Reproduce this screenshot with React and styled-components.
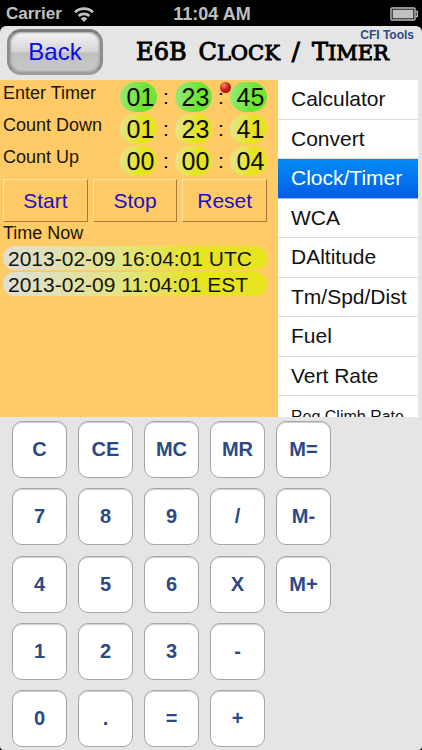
import React, { useState } from "react";
import styled, { createGlobalStyle } from "styled-components";

const GlobalStyle = createGlobalStyle`
  * {
    box-sizing: border-box;
  }
  body {
    margin: 0;
    background: #000;
    font-family: "Liberation Sans", Arial, Helvetica, sans-serif;
  }
  button, input {
    font-family: inherit;
    margin: 0;
    padding: 0;
  }
`;

const Page = styled.div`
  display: flex;
  flex-direction: column;
  min-height: 100vh;
`;

//---------------------------------------------------------------- status bar

const StatusBar = styled.div`
  display: grid;
  grid-template-columns: 1fr auto 1fr;
  align-items: center;
  height: 26px;
  padding: 2px 4px 0 6px;
  color: #c0c0c0;
  font-size: 17px;
  font-weight: bold;
`;

const Carrier = styled.div`
  display: flex;
  align-items: center;
  gap: 11px;
`;

const Clock = styled.div`
  font-size: 18px;
`;

const BatteryBox = styled.div`
  display: flex;
  justify-content: flex-end;
`;

//---------------------------------------------------------------- header

const Screen = styled.div`
  display: flex;
  flex: 1 0 auto;
  flex-direction: column;
  background: #e5e5e5;
  border-radius: 6px 6px 4px 4px;
`;

const Header = styled.header`
  display: flex;
  height: 54px;
  padding: 3px 0 0 7px;
`;

const BackButton = styled.button`
  flex: 0 0 auto;
  width: 96px;
  height: 46px;
  border: 3px solid;
  border-color: #7c7c7c #8e8e8e #9c9c9c;
  border-radius: 14px;
  background: linear-gradient(#f4f4f4, #d4d4d4 50%, #c0c0c0 52%, #c8c8c8);
  box-shadow: inset 0 0 2px 1px #a4a4a4;
  color: #0b0be8;
  font-size: 24px;
`;

const Heading = styled.div`
  display: flex;
  flex: 1;
  flex-direction: column;
`;

const ToolsLink = styled.a`
  align-self: flex-end;
  margin-right: 8px;
  color: #2f4a85;
  font-size: 12px;
  font-weight: bold;
  line-height: 12px;
  text-decoration: none;
`;

const Title = styled.h1`
  display: flex;
  align-items: baseline;
  justify-content: center;
  gap: 12px;
  margin: 0;
  color: #000;
  font-family: "DejaVu Serif", serif;
  font-size: 21px;
  font-weight: normal;
  line-height: 22px;
  text-transform: uppercase;
  white-space: nowrap;
  -webkit-text-stroke: 1px #000;
`;

const Word = styled.span`
  display: block;
  font-size: ${(p) => (p.$tall ? "24px" : "inherit")};

  &::first-letter {
    font-size: 24px;
  }
`;

//---------------------------------------------------------------- timer panel

const Main = styled.main`
  display: flex;
  height: 337px;
  padding-right: 4px;
`;

const TimerPanel = styled.section`
  flex: 1;
  padding: 2px 11px 0 3px;
  background: #ffcb66;
`;

const TimerRow = styled.div`
  display: flex;
  align-items: flex-start;
  justify-content: space-between;
  height: 32px;
`;

const Label = styled.div`
  color: #1c1408;
  font-size: 18px;
  line-height: 22px;
`;

const Digits = styled.div`
  display: flex;
  align-items: center;
  font-size: 25px;
  line-height: 30px;
`;

const pill = `
  width: 37px;
  height: 30px;
  padding-left: 4px;
  border: 0;
  border-radius: 15px;
  color: #0c0c00;
  font-size: 25px;
  line-height: 30px;
  text-align: center;
`;

const DigitInput = styled.input`
  ${pill}
  background: linear-gradient(100deg, #9bea7c, #6fe534 60%);
`;

const DigitOutput = styled.output`
  ${pill}
  background: linear-gradient(100deg, #e4e49c, #e6e41e 60%);
`;

const Colon = styled.span`
  position: relative;
  width: 18px;
  font-size: 21px;
  text-align: center;
`;

const Pin = styled.i`
  position: absolute;
  top: 0;
  left: 8px;
  width: 11px;
  height: 11px;
  border-radius: 50%;
  background: radial-gradient(circle at 35% 30%, #f08a7a, #cc1f14 45%, #8e0d08);
`;

const Actions = styled.div`
  display: grid;
  grid-template-columns: repeat(3, 1fr);
  gap: 5px;
  padding-top: 1px;
`;

const ActionButton = styled.button`
  height: 43px;
  border: 1px solid;
  border-color: #ffe2a8 #a07c38 #a07c38 #ffe2a8;
  background: transparent;
  color: #2010c4;
  font-size: 21px;
`;

const Stamps = styled.div`
  display: grid;
  gap: 2px;
  padding-top: 2px;
`;

const Stamp = styled.div`
  height: 24px;
  padding-left: 5px;
  border-radius: 12px;
  background: linear-gradient(90deg, #dededa, #e4e484 45%, #e6e41e 75%);
  color: #14140a;
  font-size: 21px;
  line-height: 26px;
  white-space: nowrap;
`;

//---------------------------------------------------------------- menu

const Menu = styled.nav`
  display: grid;
  flex: 0 0 140px;
  grid-template-rows: repeat(8, 1fr) 21px;
  overflow: hidden;
  background: #fff;
`;

const MenuItem = styled.button`
  min-height: 0;
  padding-left: 13px;
  border: 0;
  border-bottom: 1px solid ${(p) => (p.$active ? "#9cc0ee" : "#dcdcdc")};
  background: ${(p) => (p.$active ? "linear-gradient(#058cf5, #015de6)" : "#fff")};
  color: ${(p) => (p.$active ? "#fff" : "#111")};
  font-size: 21px;
  text-align: left;
  white-space: nowrap;

  &:last-child {
    height: 42px;
    border: 0;
    font-size: 16px;
  }
`;

//---------------------------------------------------------------- keypad

const Keypad = styled.section`
  display: grid;
  flex: 1 0 auto;
  grid-template-columns: repeat(6, 1fr);
  grid-auto-rows: 57px;
  column-gap: 11px;
  row-gap: 10px;
  align-content: space-between;
  padding: 4px 25px 3px 12px;
`;

const Key = styled.button`
  grid-column: ${(p) => p.$col};
  border: 1px solid #a6a6a6;
  border-radius: 10px;
  background: #fff;
  box-shadow: inset 0 1px 0 #d0d0d0;
  color: #2b4a83;
  font-size: 20px;
  font-weight: bold;
`;

const WifiIcon = () => (
  <svg width="22" height="17" viewBox="0 0 22 17" fill="none" stroke="#c0c0c0">
    <path d="M2 6.2a13 13 0 0 1 18 0" strokeWidth="2.8" />
    <path d="M5.6 10a8 8 0 0 1 10.8 0" strokeWidth="2.8" />
    <path d="M11 16l-3.4-3.5a5 5 0 0 1 6.8 0z" fill="#c0c0c0" stroke="none" />
  </svg>
);

const BatteryIcon = () => (
  <svg width="28" height="15" viewBox="0 0 28 15">
    <rect x="1" y="1" width="24" height="12" rx="1" fill="none" stroke="#c0c0c0" strokeWidth="1.4" />
    <rect x="2.6" y="2.6" width="20.8" height="8.8" fill="#c0c0c0" />
    <path d="M25.5 4.5h1.8v5h-1.8" fill="none" stroke="#c0c0c0" strokeWidth="1.3" />
  </svg>
);

const menuItems = [
  "Calculator",
  "Convert",
  "Clock/Timer",
  "WCA",
  "DAltitude",
  "Tm/Spd/Dist",
  "Fuel",
  "Vert Rate",
  "Req Climb Rate",
];

const keyRows = [
  ["C", "CE", "MC", "MR", "M="],
  ["7", "8", "9", "/", "M-"],
  ["4", "5", "6", "X", "M+"],
  ["1", "2", "3", "-"],
  ["0", ".", "=", "+"],
];

function Counter({ label, values }) {
  return (
    <TimerRow>
      <Label>{label}</Label>
      <Digits>
        {values.map((value, idx) => (
          <React.Fragment key={idx}>
            {idx > 0 && <Colon>:</Colon>}
            <DigitOutput>{value}</DigitOutput>
          </React.Fragment>
        ))}
      </Digits>
    </TimerRow>
  );
}

export default function App() {
  const [active, setActive] = useState("Clock/Timer");
  const [timer, setTimer] = useState(["01", "23", "45"]);

  const onDigitChange = (idx, value) => {
    setTimer(timer.map((old, i) => (i === idx ? value : old)));
  };

  return (
    <Page>
      <GlobalStyle />
      <StatusBar>
        <Carrier>
          Carrier
          <WifiIcon />
        </Carrier>
        <Clock>11:04 AM</Clock>
        <BatteryBox>
          <BatteryIcon />
        </BatteryBox>
      </StatusBar>

      <Screen>
        <Header>
          <BackButton>Back</BackButton>
          <Heading>
            <ToolsLink href="#tools">CFI Tools</ToolsLink>
            <Title>
              <Word $tall>E6B</Word> <Word>Clock</Word> <Word $tall>/</Word> <Word>Timer</Word>
            </Title>
          </Heading>
        </Header>

        <Main>
          <TimerPanel>
            <TimerRow>
              <Label as="label" htmlFor="timer-0">
                Enter Timer
              </Label>
              <Digits>
                {timer.map((value, idx) => (
                  <React.Fragment key={idx}>
                    {idx > 0 && <Colon>:{idx === 2 && <Pin />}</Colon>}
                    <DigitInput
                      id={`timer-${idx}`}
                      aria-label={["Hours", "Minutes", "Seconds"][idx]}
                      maxLength={2}
                      value={value}
                      onChange={(e) => onDigitChange(idx, e.target.value)}
                    />
                  </React.Fragment>
                ))}
              </Digits>
            </TimerRow>
            <Counter label="Count Down" values={["01", "23", "41"]} />
            <Counter label="Count Up" values={["00", "00", "04"]} />
            <Actions>
              <ActionButton>Start</ActionButton>
              <ActionButton>Stop</ActionButton>
              <ActionButton>Reset</ActionButton>
            </Actions>
            <Label>Time Now</Label>
            <Stamps>
              <Stamp>2013-02-09 16:04:01 UTC</Stamp>
              <Stamp>2013-02-09 11:04:01 EST</Stamp>
            </Stamps>
          </TimerPanel>

          <Menu>
            {menuItems.map((item) => (
              <MenuItem key={item} $active={item === active} onClick={() => setActive(item)}>
                {item}
              </MenuItem>
            ))}
          </Menu>
        </Main>

        <Keypad>
          {keyRows.map((row) =>
            row.map((name, idx) => (
              <Key key={name} $col={idx + 1}>
                {name}
              </Key>
            ))
          )}
        </Keypad>
      </Screen>
    </Page>
  );
}
